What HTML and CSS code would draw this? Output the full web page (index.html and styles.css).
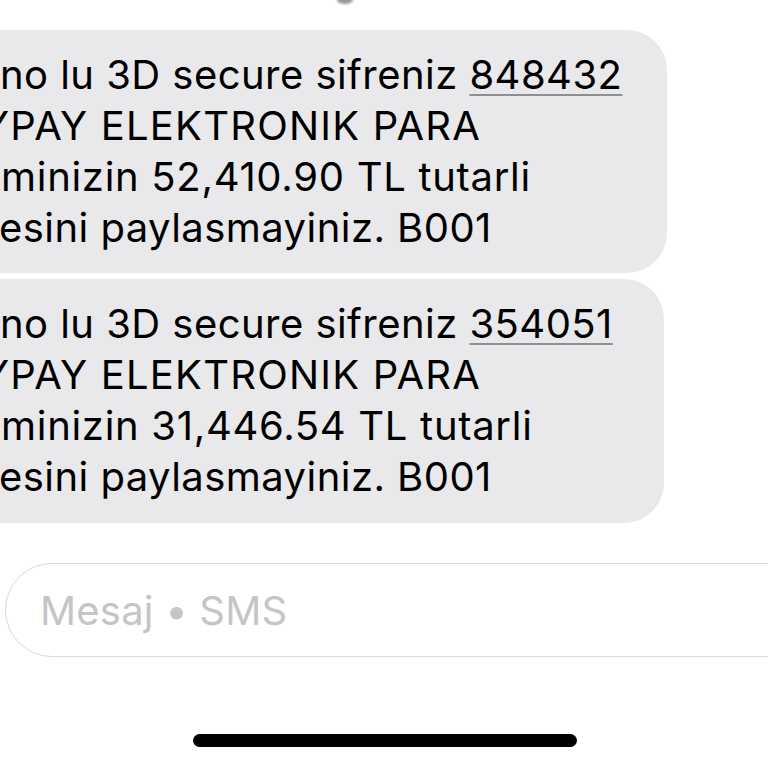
FILE: index.html
```html
<!DOCTYPE html>
<html lang="tr">
<head>
<meta charset="utf-8">
<title>Mesajlar</title>
<link rel="stylesheet" href="styles.css">
</head>
<body>
<div class="screen">
  <div class="top">
    <span class="timestamp-tail"></span>
  </div>
  <div class="thread">
    <div class="bubble bubble-first">
      <div class="line">no lu 3D secure sifreniz <span class="code">848432</span></div>
      <div class="line line-cut">YPAY ELEKTRONIK PARA</div>
      <div class="line line-m">minizin 52,410.90 TL tutarli</div>
      <div class="line line-e">esini paylasmayiniz. B001</div>
    </div>
    <div class="bubble bubble-second">
      <div class="line">no lu 3D secure sifreniz <span class="code">354051</span></div>
      <div class="line line-cut">YPAY ELEKTRONIK PARA</div>
      <div class="line line-m">minizin 31,446.54 TL tutarli</div>
      <div class="line line-e">esini paylasmayiniz. B001</div>
    </div>
  </div>
  <div class="composer">
    <div class="input">Mesaj • SMS</div>
  </div>
  <div class="home-bar-wrap">
    <div class="home-bar"></div>
  </div>
</div>
</body>
</html>
```
FILE: styles.css
```css
* { box-sizing: border-box; }
html, body {
  margin: 0;
  padding: 0;
  background: #ffffff;
}
.screen {
  width: 768px;
  height: 768px;
  overflow: hidden;
  font-family: "Inter", "Roboto", "Liberation Sans", sans-serif;
  color: #000;
}
.top {
  height: 30px;
  position: relative;
}
.timestamp-tail {
  position: absolute;
  left: 337px;
  top: -4px;
  width: 16px;
  height: 8px;
  border-radius: 50%;
  background: #9a9a9a;
  filter: blur(1px);
}
.thread {
  display: flex;
  flex-direction: column;
  gap: 6px;
}
.bubble {
  background: #e9e9eb;
  border-radius: 0 40px 40px 0;
  margin-left: -60px;
  padding: 19px 0 0 60px;
  font-size: 40px;
  letter-spacing: 0.45px;
  line-height: 51px;
  white-space: nowrap;
}
.bubble-first { width: 727px; height: 243px; }
.bubble-second { width: 724px; height: 244px; }
.line-cut { margin-left: -18px; letter-spacing: 1.2px; }
.line-m { margin-left: 1px; letter-spacing: 0.7px; }
.line-e { margin-left: -1px; }
.code {
  text-decoration: underline;
  text-decoration-color: #8e8e93;
  text-decoration-thickness: 2px;
  text-underline-offset: 5px;
}
.composer {
  padding: 40px 0 0 5px;
}
.input {
  width: 820px;
  height: 94px;
  border: 1.5px solid #d9d9db;
  border-radius: 47px;
  padding-left: 34px;
  font-size: 40px;
  letter-spacing: 0.2px;
  line-height: 93px;
  color: #c5c5c8;
}
.home-bar-wrap {
  display: flex;
  justify-content: center;
  padding: 77px 0 0 2px;
}
.home-bar {
  width: 384px;
  height: 13px;
  border-radius: 7px;
  background: #000;
}
```
